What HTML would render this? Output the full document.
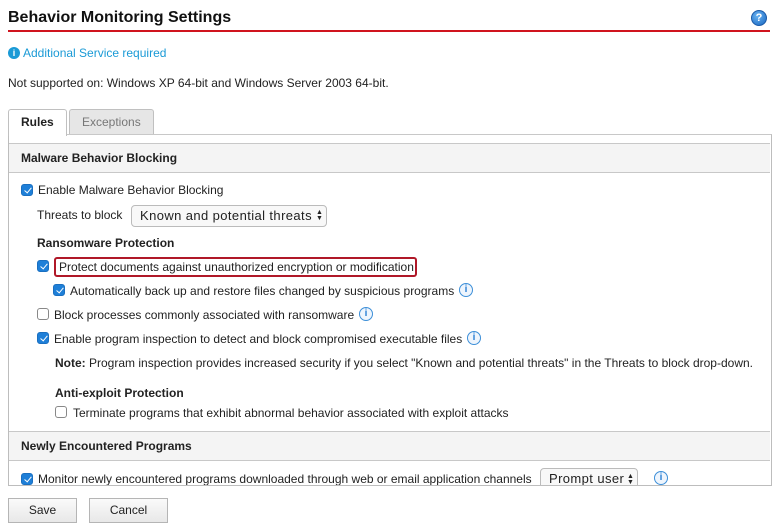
<!DOCTYPE html>
<html><head><meta charset="utf-8"><style>
*{margin:0;padding:0;box-sizing:border-box}
body{width:781px;height:530px;background:#fff;font-family:"Liberation Sans",Arial,sans-serif;font-size:12px;color:#222;position:relative;overflow:hidden}
.a{position:absolute;white-space:nowrap;line-height:14px}
.b{font-weight:bold}
.cb{position:absolute;width:12px;height:12px;border-radius:3px;background:#1e7fd8;border:1px solid #1a6fc0}
.cb::after{content:"";position:absolute;left:3.5px;top:1px;width:3px;height:6px;border:solid #fff;border-width:0 1.6px 1.6px 0;transform:rotate(40deg)}
.ub{position:absolute;width:12px;height:12px;border-radius:3px;background:#fff;border:1px solid #888}
.inf{position:absolute;width:14px;height:14px;border-radius:50%;border:1px solid #3d8fd8;background:#eef5fd;color:#2a7fd4;font:bold 10px/12px "Liberation Sans",sans-serif;text-align:center}
.band{position:absolute;left:9px;width:761px;background:#f4f4f4;border-top:1px solid #c8c8c8;border-bottom:1px solid #c8c8c8}
.sel{position:absolute;height:22px;border:1px solid #bbb;border-radius:4px;background:#f8f8f8;font-size:13px;line-height:20px;padding-left:8px;color:#222;letter-spacing:0.4px}
.arr{position:absolute;font-size:7px;line-height:6px;color:#222}
.btn{position:absolute;height:25px;border:1px solid #b5b5b5;background:linear-gradient(#fafafa,#e8e8e8);font-size:12px;line-height:23px;text-align:center;color:#222}
</style></head><body>
<div class="a b" style="left:8px;top:8px;font-size:16px;line-height:19px;color:#111">Behavior Monitoring Settings</div>
<div style="position:absolute;left:8px;top:30px;width:762px;height:2px;background:#d0141e"></div>
<div style="position:absolute;left:751px;top:10px;width:16px;height:16px;border-radius:50%;background:radial-gradient(circle at 40% 35%,#6ab4f2,#1765c0);border:1px solid #1a5aa8;color:#fff;font:bold 11px/14px 'Liberation Sans';text-align:center">?</div>
<div style="position:absolute;left:8px;top:47px;width:12px;height:12px;border-radius:50%;background:#1a9ad6;color:#fff;font:bold 9px/12px 'Liberation Sans';text-align:center">i</div>
<div class="a" style="left:23px;top:46px;color:#1a9ad6">Additional Service required</div>
<div class="a" style="left:8px;top:76px">Not supported on: Windows XP 64-bit and Windows Server 2003 64-bit.</div>
<div style="position:absolute;left:69px;top:109px;width:85px;height:25px;background:#e6e6e6;border:1px solid #c0c0c0;border-bottom:none;border-radius:3px 3px 0 0"></div>
<div class="a" style="left:82px;top:115px;color:#777">Exceptions</div>
<div style="position:absolute;left:8px;top:134px;width:764px;height:352px;border:1px solid #bdbdbd;border-top-color:#c8c8c8"></div>
<div style="position:absolute;left:8px;top:109px;width:59px;height:27px;background:#fff;border:1px solid #c0c0c0;border-bottom:none;border-radius:3px 3px 0 0"></div>
<div class="a b" style="left:21px;top:115px">Rules</div>
<div class="band" style="top:143px;height:30px"></div>
<div class="a b" style="left:21px;top:151px">Malware Behavior Blocking</div>
<div class="cb" style="left:21px;top:184px"></div>
<div class="a" style="left:38px;top:183px">Enable Malware Behavior Blocking</div>
<div class="a" style="left:37px;top:208px">Threats to block</div>
<div class="sel" style="left:131px;top:205px;width:196px">Known and potential threats</div>
<div class="arr" style="left:316px;top:210px">&#9650;<br>&#9660;</div>
<div class="a b" style="left:37px;top:236px">Ransomware Protection</div>
<div class="cb" style="left:37px;top:260px"></div>
<div style="position:absolute;left:54px;top:257px;width:363px;height:20px;border:2px solid #b01828;border-radius:3px"></div>
<div class="a" style="left:59px;top:260px">Protect documents against unauthorized encryption or modification</div>
<div class="cb" style="left:53px;top:284px"></div>
<div class="a" style="left:70px;top:284px">Automatically back up and restore files changed by suspicious programs</div>
<div class="inf" style="left:459px;top:283px">i</div>
<div class="ub" style="left:37px;top:308px"></div>
<div class="a" style="left:54px;top:308px">Block processes commonly associated with ransomware</div>
<div class="inf" style="left:359px;top:307px">i</div>
<div class="cb" style="left:37px;top:332px"></div>
<div class="a" style="left:54px;top:332px">Enable program inspection to detect and block compromised executable files</div>
<div class="inf" style="left:467px;top:331px">i</div>
<div class="a" style="left:55px;top:356px"><b>Note:</b> Program inspection provides increased security if you select "Known and potential threats" in the Threats to block drop-down.</div>
<div class="a b" style="left:55px;top:386px">Anti-exploit Protection</div>
<div class="ub" style="left:55px;top:406px"></div>
<div class="a" style="left:73px;top:406px">Terminate programs that exhibit abnormal behavior associated with exploit attacks</div>
<div class="band" style="top:431px;height:30px"></div>
<div class="a b" style="left:21px;top:439px">Newly Encountered Programs</div>
<div style="position:absolute;left:9px;top:462px;width:762px;height:23px;overflow:hidden">
<div class="cb" style="left:12px;top:11px"></div>
<div class="a" style="left:29px;top:10px">Monitor newly encountered programs downloaded through web or email application channels</div>
<div class="sel" style="left:531px;top:6px;width:98px;height:24px">Prompt user</div>
<div class="arr" style="left:618px;top:12px">&#9650;<br>&#9660;</div>
<div class="inf" style="left:645px;top:9px">i</div>
</div>
<div class="btn" style="left:8px;top:498px;width:69px">Save</div>
<div class="btn" style="left:89px;top:498px;width:79px">Cancel</div>
</body></html>
